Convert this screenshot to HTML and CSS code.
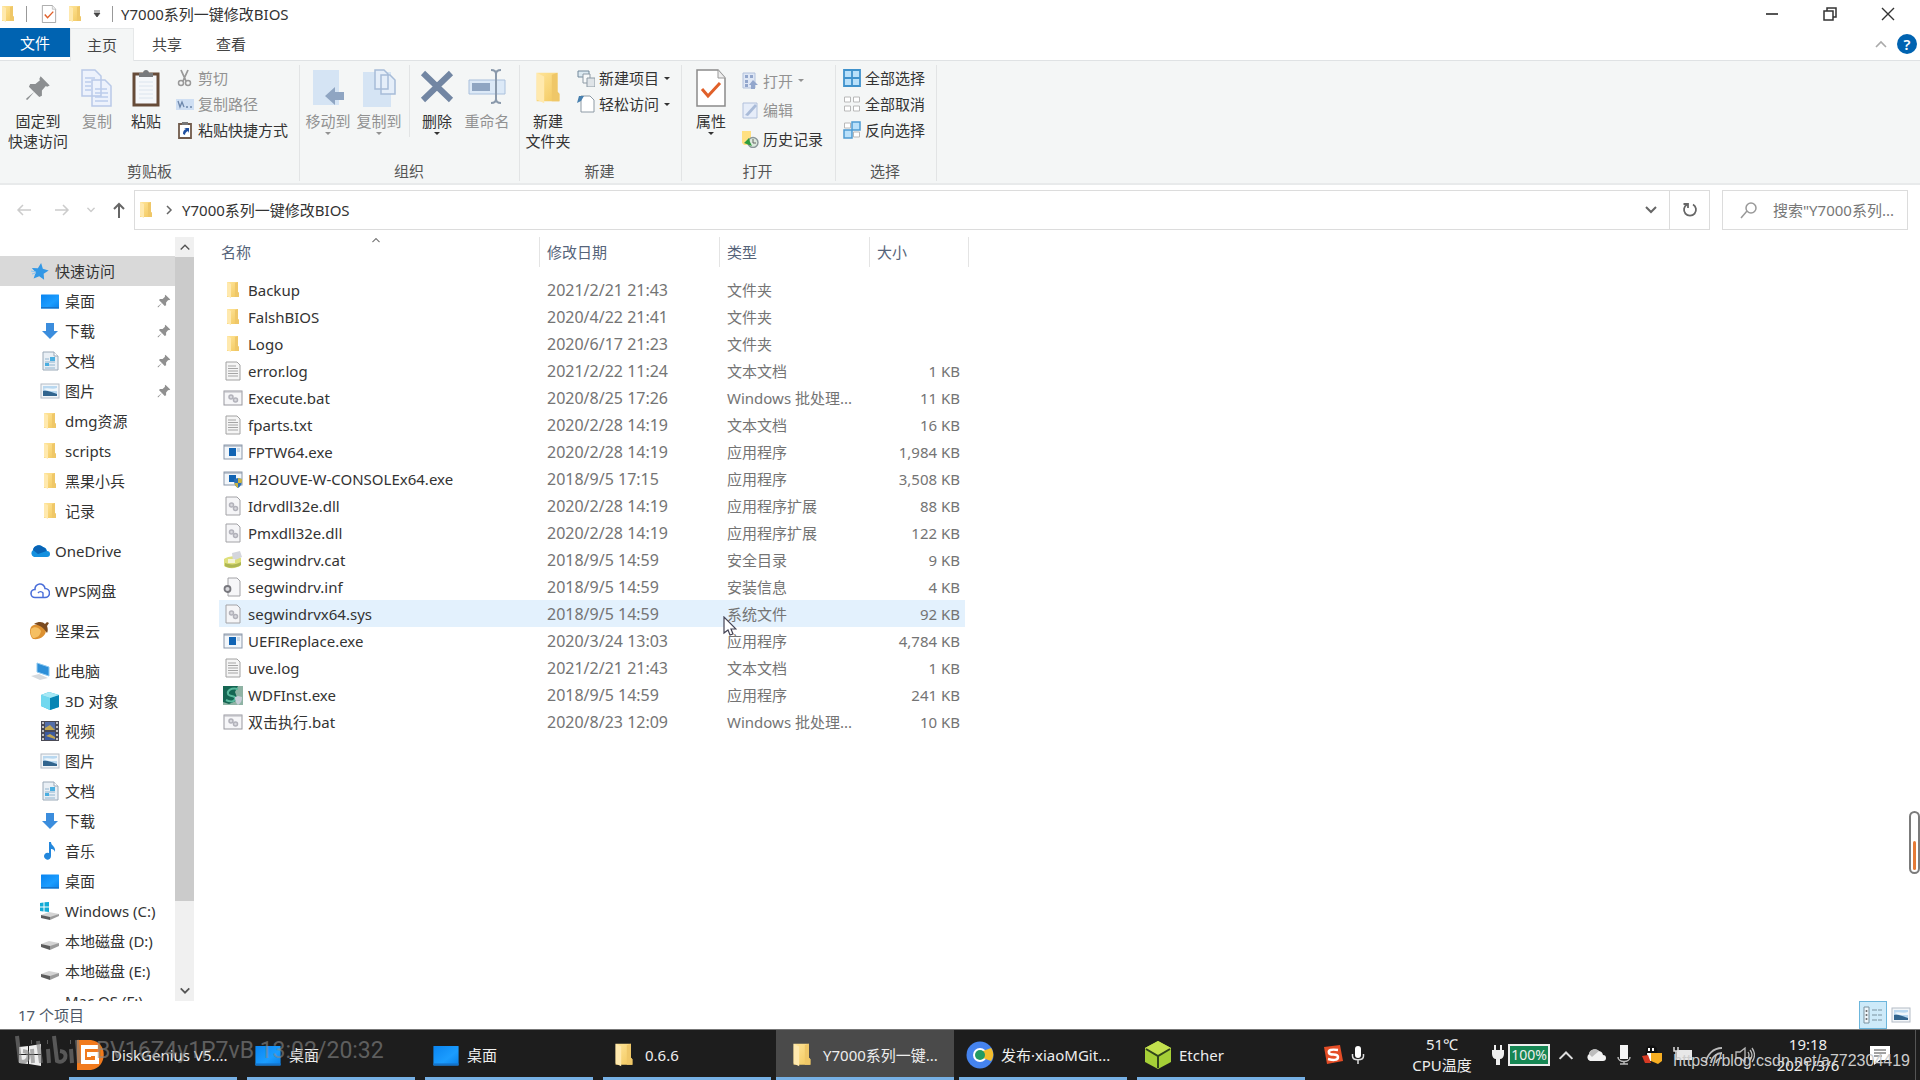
FILE: index.html
```html
<!DOCTYPE html>
<html lang="zh-CN">
<head>
<meta charset="utf-8">
<title>Y7000系列一键修改BIOS</title>
<link rel="stylesheet" href="styles.css">
</head>
<body>
<svg class="defs" aria-hidden="true">
  <defs>
    <linearGradient id="gold" x1="0" y1="0" x2="1" y2="1"><stop offset="0" stop-color="#ffe59a"/><stop offset="1" stop-color="#f2c75c"/></linearGradient>
    <linearGradient id="sky" x1="0" y1="0" x2="1" y2="1"><stop offset="0" stop-color="#0a84f0"/><stop offset="0.6" stop-color="#1b9dff"/><stop offset="1" stop-color="#0a80e8"/></linearGradient>
  </defs>
  <symbol id="folder" viewBox="0 0 20 20"><path d="M4 2h11v10l1 1v4H4z" fill="url(#gold)"/><path d="M4 2l4 2v14l-4-2z" fill="#ffe9ae"/><path d="M12 3v14h4v-4l-1-1V2z" fill="#efc768"/></symbol>
  <symbol id="desktop" viewBox="0 0 20 20"><rect x="1" y="3.500" width="18" height="14" rx="0.500" fill="url(#sky)"/><path d="M1 16h18v1.500H1z" fill="#1673c8"/></symbol>
  <symbol id="down" viewBox="0 0 20 20"><path d="M6 2h8v8h4l-8 8-8-8h4z" fill="#3b8ddd"/></symbol>
  <symbol id="docs" viewBox="0 0 20 20"><path d="M3 1h11l4 4v14H3z" fill="#e9eff5" stroke="#9aa9b8"/><path d="M14 1v4h4" fill="#fff" stroke="#9aa9b8"/><path d="M5 8h4M5 11h10M5 14h10M5 17h10" stroke="#8fb4cf"/><path d="M10 6h5v4h-5zM5 12h4v3H5z" fill="#4aaee0"/></symbol>
  <symbol id="pics" viewBox="0 0 20 20"><rect x="1" y="3" width="18" height="14" fill="#f3f6f9" stroke="#b4bcc6"/><path d="M3 5h14v10H3z" fill="#b9d8f0"/><path d="M3 10c4-1 8 1 14 3v2H3z" fill="#32658e"/><path d="M3 8c5-2 9 1 14-1v3H9z" fill="#f0f7fb"/></symbol>
  <symbol id="star" viewBox="0 0 20 20"><path d="M10 2l2.500 5.500 6 .7-4.500 4 1.300 6-5.300-3-5.300 3 1.300-6-4.500-4 6-.7z" fill="#3398e6" transform="rotate(8 10 10)"/><path d="M1 10l5 1M2 13l4-1" stroke="#8cc4ef"/></symbol>
  <symbol id="pin" viewBox="0 0 20 20"><path d="M12 1l7 7-2 1-1-.5-3 3.500v4l-2 1-4-4-5 6-1 0 0-1 6-5-4-4 1-2h4l3.500-3-.5-1z" fill="currentColor"/></symbol>
  <symbol id="onedrive" viewBox="0 0 20 20"><path d="M4 16a4 4 0 0 1-1-7 6 6 0 0 1 10-3 5 5 0 0 1 4 4 3 3 0 0 1 0 6z" fill="#1490df"/><path d="M3 9a6 6 0 0 1 10-3 5 5 0 0 1 3.500 4L8 13z" fill="#0863b5"/></symbol>
  <symbol id="wps" viewBox="0 0 20 20"><path d="M5 16.500a4 4 0 0 1 0-8 5 5 0 0 1 10-1 4.500 4.500 0 0 1 0 9z" fill="#fff" stroke="#4a6ed9" stroke-width="1.600"/><path d="M8 12a3 3 0 0 1 5 0v4" fill="none" stroke="#4a6ed9" stroke-width="1.400"/></symbol>
  <symbol id="nut" viewBox="0 0 20 20"><path d="M1 6c4-4 13-3 15 3 0 6-6 10-13 9C0 15-1 10 1 6z" fill="#dc9030"/><path d="M1 8c3-3 8-2 10 2-1 5-4 7-8 7-2-2-3-6-2-9z" fill="#f5bf62"/><path d="M4 3c5-3 9-2 11 0l2-2 2 1-2 3c1 3 1 5 0 7-3-5-7-8-13-9z" fill="#7b4b20"/></symbol>
  <symbol id="pc" viewBox="0 0 20 20"><path d="M7 2l12 4v9L7 11z" fill="#2d8fd8" stroke="#8cc8f0"/><path d="M1 15l8-2 9 4-8 2z" fill="#d6dade"/></symbol>
  <symbol id="cube" viewBox="0 0 20 20"><path d="M1 4l8-3 10 3v12l-9 3-9-4z" fill="#2bb6dc"/><path d="M1 4l9 3v12l-9-4z" fill="#71d8ef"/><path d="M10 7l9-3v12l-9 3z" fill="#0785b4"/><path d="M1 4l8-3 10 3-9 3z" fill="#a6e8f5"/></symbol>
  <symbol id="video" viewBox="0 0 20 20"><path d="M1 0h18v20H1z" fill="#4a4a55"/><path d="M5 1h10v8H5z" fill="#546ea8"/><path d="M5 11h10v8H5z" fill="#3c5aa0"/><path d="M5 7l5-3 5 5H5zM6 15l4-2 5 3v2z" fill="#c3a750"/><path d="M3 1v19M17 1v19" stroke="#eee" stroke-width="1.500" stroke-dasharray="2 2"/></symbol>
  <symbol id="music" viewBox="0 0 20 20"><path d="M9 1h2c0 4 5 4 4 10-1-3-3-3-4-3v7a3.500 3.500 0 1 1-2-3z" fill="#2387dc"/></symbol>
  <symbol id="drive" viewBox="0 0 20 20"><path d="M1 13l8-3 10 2-9 5z" fill="#d4d4d4"/><path d="M1 13l9 2v4l-9-3z" fill="#5c5c5c"/><path d="M10 15l9-3v3l-9 4z" fill="#9b9b9b"/></symbol>
  <symbol id="windrive" viewBox="0 0 20 20"><path d="M1 14l8-3 10 2-9 4z" fill="#d4d4d4"/><path d="M1 14l9 2v3l-9-2z" fill="#5c5c5c"/><path d="M10 16l9-3v2l-9 4z" fill="#9b9b9b"/><path d="M0 2l3.500-.5v4H0zM4.500 1.300L9 1v4.500H4.500zM0 6.500h3.500v4L0 10zM4.500 6.500H9V11l-4.500-.5z" fill="#13abd6"/></symbol>
  <symbol id="text" viewBox="0 0 20 20"><path d="M3 1h11l3 3v15H3z" fill="#f5f5f5" stroke="#a2a2a2"/><path d="M5 5h8M5 7.500h10M5 10h10M5 12.500h10M5 15h10" stroke="#a5a5a5"/></symbol>
  <symbol id="bat" viewBox="0 0 20 20"><rect x="1" y="3" width="18" height="14" fill="#f6f6f8" stroke="#98989f"/><path d="M1 4h18" stroke="#b5b5bc"/><circle cx="8" cy="9" r="2" fill="#d8d8de" stroke="#b2b2ba" stroke-width="1.500"/><circle cx="12.500" cy="12" r="2" fill="#d8d8de" stroke="#b2b2ba" stroke-width="1.500"/></symbol>
  <symbol id="exe" viewBox="0 0 20 20"><rect x="1" y="3" width="18" height="14" fill="#f2f6fa" stroke="#8b98aa"/><path d="M1 4h18" stroke="#8b98aa"/><path d="M6 6h7v8H6z" fill="#1164b4"/><path d="M14 7h3M14 9h3" stroke="#a2bbd5"/></symbol>
  <symbol id="exeshield" viewBox="0 0 20 20"><rect x="1" y="3" width="18" height="13" fill="#f2f6fa" stroke="#8b98aa"/><path d="M1 4h18" stroke="#8b98aa"/><path d="M6 6h7v7H6z" fill="#1164b4"/><path d="M11 10l4-1 4 1c0 5-1 7-4 9-3-2-4-4-4-9z" fill="#2c6fb5"/><path d="M15 9l4 1c0 2 0 3-.5 4H15zM11.500 14H15v5c-2-1-3-3-3.500-5z" fill="#c9b443"/></symbol>
  <symbol id="dll" viewBox="0 0 20 20"><path d="M3 1h11l3 3v15H3z" fill="#f5f5f7" stroke="#a2a2a6"/><circle cx="8.500" cy="9" r="2" fill="#d8d8de" stroke="#b2b2ba" stroke-width="1.500"/><circle cx="12.500" cy="12.500" r="2" fill="#d8d8de" stroke="#b2b2ba" stroke-width="1.500"/></symbol>
  <symbol id="cat" viewBox="0 0 20 20"><path d="M1 9c3-3 14-4 17-1v7c-4 4-13 4-17 1z" fill="#dfe07c"/><path d="M2 13c5 2 11 2 16-1v3c-4 3-13 4-16 1z" fill="#aeb653"/><path d="M9 3l8-2 2 6-9 4z" fill="#d4d6dd"/><path d="M5 9h7v4H5z" fill="#f4f4d8"/></symbol>
  <symbol id="inf" viewBox="0 0 20 20"><path d="M5 1h9l3 3v15H5z" fill="#f6f6f8" stroke="#a2a2a6"/><circle cx="4.500" cy="12" r="3" fill="#d8d8dc" stroke="#77777d" stroke-width="1.800"/></symbol>
  <symbol id="wdf" viewBox="0 0 20 20"><path d="M0 1h20v19H0z" fill="#8fb3a4"/><path d="M0 1h15l-3 6 3 8-9 4-6-2z" fill="#156653"/><path d="M15 4C8 2 4 6 5 9s8 1 7 5-7 2-9 1" fill="none" stroke="#59b99d" stroke-width="2"/><path d="M12 12l3-1 4 1c0 4-1 6-4 8-2-2-3-4-3-8z" fill="#c8cdd8"/></symbol>
  <symbol id="props" viewBox="0 0 30 38"><path d="M1 1h21l7 8v28H1z" fill="#fff" stroke="#8b8b8b" stroke-width="1.500"/><path d="M22 1v8h7" fill="#eee" stroke="#999"/><path d="M6 20l6 7L24 14" fill="none" stroke="#e0602a" stroke-width="3"/></symbol>
  <symbol id="copy" viewBox="0 0 34 40"><path d="M2 1h13l6 6v20H2zM12 11h13l6 6v20H12z" fill="#edf2fc" stroke="#b9c9e8" stroke-width="1.500"/><path d="M5 9h10M5 13h6M5 17h6M5 21h6M15 20h12M15 24h13M15 28h13M15 32h13" stroke="#bccdec" stroke-width="1.500"/></symbol>
  <symbol id="clip" viewBox="0 0 28 38"><path d="M2 5h24v31H2z" fill="#f5f7fa" stroke="#664b38" stroke-width="3"/><path d="M7 8V4h4c0-4 6-4 6 0h4v4z" fill="#77797c"/><path d="M7 13h14M7 17h14M7 21h14M7 25h14M7 29h14" stroke="#dbe4ee"/></symbol>
  <symbol id="caret" viewBox="0 0 8 5"><path d="M1 1h6L4 4z" fill="currentColor"/></symbol>
  <symbol id="up" viewBox="0 0 14 8"><path d="M2 7l5-5 5 5" fill="none" stroke="currentColor" stroke-width="1.600"/></symbol>
  <symbol id="dn" viewBox="0 0 14 8"><path d="M2 1l5 5 5-5" fill="none" stroke="currentColor" stroke-width="2"/></symbol>
  <symbol id="mic" viewBox="0 0 14 20"><rect x="4" y="1" width="6" height="12" rx="3" fill="#fff"/><path d="M1.500 9v2c0 5 11 5 11 0V9M7 15v4" fill="none" stroke="#ddd" stroke-width="1.500"/></symbol>
</svg>

<header class="titlebar">
  <svg class="i20 tight"><use href="#folder"/></svg>
  <span class="tick"></span>
  <button class="plain" aria-label="属性"><svg width="16" height="18"><use href="#props"/></svg></button>
  <button class="plain" aria-label="新建文件夹"><svg class="i20"><use href="#folder"/></svg></button>
  <button class="plain qat" aria-label="自定义快速访问工具栏"><svg width="8" height="8" viewBox="0 0 8 8"><path d="M1 1h6M1 3h6L4 7z" fill="#444" stroke="#444" stroke-width="0.800"/></svg></button>
  <span class="tick"></span>
  <h1>Y7000系列一键修改BIOS</h1>
  <div class="winctl">
    <button class="plain" aria-label="最小化"><svg width="14" height="14"><path d="M1 7h12" stroke="#555" stroke-width="2"/></svg></button>
    <button class="plain" aria-label="还原"><svg width="14" height="14"><path d="M1 4h9v9H1zM4 4V1h9v9h-3" fill="none" stroke="#333" stroke-width="1.500"/></svg></button>
    <button class="plain" aria-label="关闭"><svg width="14" height="14"><path d="M1 1l12 12M13 1L1 13" stroke="#333" stroke-width="1.400"/></svg></button>
  </div>
</header>

<nav class="tabs">
  <button class="tab file">文件</button>
  <button class="tab active">主页</button>
  <button class="tab share">共享</button>
  <button class="tab">查看</button>
  <div class="tabend">
    <button class="plain faint" aria-label="最小化功能区"><svg width="14" height="8"><use href="#up"/></svg></button>
    <button class="help" aria-label="帮助">?</button>
  </div>
</nav>

<section class="ribbon">
  <div class="group g1">
    <div class="tools">
      <button class="big w76"><span class="pic pinned"><svg width="26" height="26"><use href="#pin"/></svg></span>固定到<br>快速访问</button>
      <button class="big w42 off"><span class="pic"><svg width="34" height="40"><use href="#copy"/></svg></span>复制</button>
      <button class="big w56"><span class="pic"><svg width="28" height="38"><use href="#clip"/></svg></span>粘贴</button>
      <div class="stack">
        <button class="small off"><svg class="i18" viewBox="0 0 18 18"><path d="M5 1l5 11M12 1L7 12" stroke="#999" stroke-width="1.800"/><circle cx="5" cy="14" r="2.500" fill="none" stroke="#999" stroke-width="1.500"/><circle cx="12" cy="14" r="2.500" fill="none" stroke="#999" stroke-width="1.500"/></svg>剪切</button>
        <button class="small off"><svg class="i18" viewBox="0 0 18 18"><path d="M0 4h18v11H0z" fill="#cfdff3"/><path d="M2 6l2 6 2-5 2 5M10 12h2M14 12h2" fill="none" stroke="#6e88ac" stroke-width="1.300"/></svg>复制路径</button>
        <button class="small"><svg class="i18" viewBox="0 0 18 18"><path d="M3 3h12v14H3z" fill="#fff" stroke="#705a4b" stroke-width="1.800"/><path d="M6 1h6v3H6z" fill="#777"/><path d="M7 13c0-3 1-4 3-5L8 7h5v5l-1-2c-2 1-3 2-3 4z" fill="#1f4fa0"/></svg>粘贴快捷方式</button>
      </div>
    </div>
    <h2>剪贴板</h2>
  </div>
  <div class="group g2">
    <div class="tools">
      <button class="big w54 off"><span class="pic"><svg width="34" height="38" viewBox="0 0 34 38"><path d="M2 1h26v35H2z" fill="#d5e4f4"/><path d="M14 27l10-9v5h9v8h-9v5z" fill="#8fa5c2"/></svg></span>移动到<svg class="drop"><use href="#caret"/></svg></button>
      <button class="big w48 off"><span class="pic"><svg width="34" height="40" viewBox="0 0 34 40"><path d="M1 3h28v35H1z" fill="#d5e4f4"/><path d="M13 1h9l4 4v15H13zM19 6h9l5 5v14H19z" fill="#e5eef9" stroke="#a7bcd8" stroke-width="1.500"/></svg></span>复制到<svg class="drop"><use href="#caret"/></svg></button>
      <span class="inner"></span>
      <button class="big w50"><span class="pic"><svg width="34" height="34" viewBox="0 0 34 34"><path d="M3 4l28 27M31 4L3 31" stroke="#7286a3" stroke-width="6"/></svg></span>删除<svg class="drop"><use href="#caret"/></svg></button>
      <button class="big w50 off"><span class="pic"><svg width="38" height="36" viewBox="0 0 38 36"><path d="M1 11h36v14H1z" fill="#dce9f7" stroke="#aac0dc"/><path d="M4 14h18v8H4z" fill="#8fa5c2"/><path d="M23 1c3 0 5 1 5 4 0-3 2-4 5-4M28 5v26M23 34c3 0 5-1 5-4 0 3 2 4 5 4" fill="none" stroke="#8a99ab" stroke-width="2"/></svg></span>重命名</button>
    </div>
    <h2>组织</h2>
  </div>
  <div class="group g3">
    <div class="tools">
      <button class="big w54"><span class="pic"><svg width="38" height="38"><use href="#folder"/></svg></span>新建<br>文件夹</button>
      <div class="stack">
        <button class="small"><svg class="i18" viewBox="0 0 18 18"><path d="M1 2h11v6H1z" fill="#dce9f1" stroke="#73899b"/><path d="M6 5h7v9H6z" fill="#f7f9fa" stroke="#8d9aa5"/><path d="M10 9h8v9h-8z" fill="#dfe4e8" stroke="#8d9aa5"/></svg>新建项目<svg class="side"><use href="#caret"/></svg></button>
        <button class="small"><svg class="i18" viewBox="0 0 18 18"><path d="M4 1h9l4 4v12H4z" fill="#fff" stroke="#8d9aa5"/><path d="M0 8l2-7h5L4 6z" fill="#467fae"/></svg>轻松访问<svg class="side"><use href="#caret"/></svg></button>
      </div>
    </div>
    <h2>新建</h2>
  </div>
  <div class="group g4">
    <div class="tools">
      <button class="big w56"><span class="pic"><svg width="30" height="38"><use href="#props"/></svg></span>属性<svg class="drop"><use href="#caret"/></svg></button>
      <div class="stack tall">
        <button class="small off"><svg class="i18" viewBox="0 0 18 18"><path d="M2 1h12v15H2z" fill="#dfe7f5" stroke="#b2c1dc"/><path d="M4 3h3v3H4zM4 8h3v3H4zM9 3h3v3H9zM4 12h3v3H4zM12 8l5 5h-3v4h-4v-4H8z" fill="#92a6cc"/></svg>打开<svg class="side"><use href="#caret"/></svg></button>
        <button class="small off"><svg class="i18" viewBox="0 0 18 18"><path d="M2 2h14v15H2z" fill="#e6edf9" stroke="#b2c1dc"/><path d="M4 14L14 3l2 2L7 15z" fill="#a9bbd8"/></svg>编辑</button>
        <button class="small"><svg class="i18" viewBox="0 0 18 18"><path d="M1 1h9v14H3L1 13z" fill="#ffe082"/><circle cx="12" cy="12.500" r="5" fill="#dbe9dc" stroke="#8a9699" stroke-width="1.400"/><path d="M12 9v4h3" fill="none" stroke="#666"/><path d="M3 13l5-5 1 4 2 4z" fill="#2d9c3e"/></svg>历史记录</button>
      </div>
    </div>
    <h2>打开</h2>
  </div>
  <div class="group g5">
    <div class="tools">
      <div class="stack">
        <button class="small"><svg class="i18" viewBox="0 0 18 18"><path d="M1 1h16v16H1zM9 1v16M1 9h16" fill="#b9e0fa" stroke="#4092cc" stroke-width="1.800"/></svg>全部选择</button>
        <button class="small"><svg class="i18" viewBox="0 0 18 18"><path d="M1.500 2h6v5h-6zM10.500 2h6v5h-6zM1.500 11h6v5h-6zM10.500 11h6v5h-6z" fill="#fff" stroke="#b8b8b8"/></svg>全部取消</button>
        <button class="small"><svg class="i18" viewBox="0 0 18 18"><path d="M1.500 2h6v5h-6zM10.500 11h6v5h-6z" fill="#fff" stroke="#b8b8b8"/><path d="M9 1h8v8H9zM1 9h8v8H1z" fill="#b9e0fa" stroke="#4d9bd2" stroke-width="1.500"/></svg>反向选择</button>
      </div>
    </div>
    <h2>选择</h2>
  </div>
</section>

<section class="addressrow">
  <div class="moves">
    <button class="plain pale" aria-label="后退"><svg width="16" height="14"><path d="M15 7H2M7 2L2 7l5 5" fill="none" stroke="currentColor" stroke-width="1.500"/></svg></button>
    <button class="plain pale" aria-label="前进"><svg width="16" height="14"><path d="M1 7h13M9 2l5 5-5 5" fill="none" stroke="currentColor" stroke-width="1.500"/></svg></button>
    <button class="plain pale" aria-label="最近浏览的位置"><svg width="10" height="8" viewBox="0 0 14 8"><use href="#dn"/></svg></button>
    <button class="plain" aria-label="上移"><svg width="14" height="16"><path d="M7 16V2M2 7l5-5 5 5" fill="none" stroke="#666" stroke-width="2"/></svg></button>
  </div>
  <div class="address">
    <svg class="i20"><use href="#folder"/></svg>
    <svg class="sep" width="8" height="12"><path d="M2 2l4 4-4 4" fill="none" stroke="#666" stroke-width="1.500"/></svg>
    <a href="#">Y7000系列一键修改BIOS</a>
    <button class="plain expand" aria-label="历史位置"><svg width="14" height="8"><use href="#dn"/></svg></button>
    <button class="plain refresh" aria-label="刷新"><svg width="16" height="16"><path d="M5 2.500a6 6 0 1 0 6 0M1.500 2H6v4" fill="none" stroke="#666" stroke-width="1.800"/></svg></button>
  </div>
  <label class="search"><svg width="18" height="18"><circle cx="11" cy="7" r="5" fill="none" stroke="#999" stroke-width="1.500"/><path d="M7 10l-6 7" stroke="#999" stroke-width="1.500"/></svg><input type="text" aria-label="搜索" placeholder="搜索&quot;Y7000系列..."></label>
</section>

<main class="content">
  <nav class="tree">
    <ul>
      <li><a class="root chosen" href="#"><svg class="i20"><use href="#star"/></svg>快速访问</a></li>
      <li><a href="#"><svg class="i20"><use href="#desktop"/></svg>桌面<svg class="mark"><use href="#pin"/></svg></a></li>
      <li><a href="#"><svg class="i20"><use href="#down"/></svg>下载<svg class="mark"><use href="#pin"/></svg></a></li>
      <li><a href="#"><svg class="i20"><use href="#docs"/></svg>文档<svg class="mark"><use href="#pin"/></svg></a></li>
      <li><a href="#"><svg class="i20"><use href="#pics"/></svg>图片<svg class="mark"><use href="#pin"/></svg></a></li>
      <li><a href="#"><svg class="i20"><use href="#folder"/></svg>dmg资源</a></li>
      <li><a href="#"><svg class="i20"><use href="#folder"/></svg>scripts</a></li>
      <li><a href="#"><svg class="i20"><use href="#folder"/></svg>黑果小兵</a></li>
      <li><a href="#"><svg class="i20"><use href="#folder"/></svg>记录</a></li>
    </ul>
    <ul><li><a class="root" href="#"><svg class="i20"><use href="#onedrive"/></svg>OneDrive</a></li></ul>
    <ul><li><a class="root" href="#"><svg class="i20"><use href="#wps"/></svg>WPS网盘</a></li></ul>
    <ul><li><a class="root" href="#"><svg class="i20"><use href="#nut"/></svg>坚果云</a></li></ul>
    <ul>
      <li><a class="root" href="#"><svg class="i20"><use href="#pc"/></svg>此电脑</a></li>
      <li><a href="#"><svg class="i20"><use href="#cube"/></svg>3D 对象</a></li>
      <li><a href="#"><svg class="i20"><use href="#video"/></svg>视频</a></li>
      <li><a href="#"><svg class="i20"><use href="#pics"/></svg>图片</a></li>
      <li><a href="#"><svg class="i20"><use href="#docs"/></svg>文档</a></li>
      <li><a href="#"><svg class="i20"><use href="#down"/></svg>下载</a></li>
      <li><a href="#"><svg class="i20"><use href="#music"/></svg>音乐</a></li>
      <li><a href="#"><svg class="i20"><use href="#desktop"/></svg>桌面</a></li>
      <li><a href="#"><svg class="i20"><use href="#windrive"/></svg>Windows (C:)</a></li>
      <li><a href="#"><svg class="i20"><use href="#drive"/></svg>本地磁盘 (D:)</a></li>
      <li><a href="#"><svg class="i20"><use href="#drive"/></svg>本地磁盘 (E:)</a></li>
      <li><a href="#"><svg class="i20"></svg>Mac OS (F:)</a></li>
    </ul>
  </nav>
  <div class="scroll">
    <button class="plain" aria-label="向上滚动"><svg width="12" height="8" viewBox="0 0 14 8"><use href="#up"/></svg></button>
    <div class="track"><div class="thumb"></div></div>
    <button class="plain" aria-label="向下滚动"><svg width="12" height="8" viewBox="0 0 14 8"><use href="#dn"/></svg></button>
  </div>
  <div class="files">
    <table>
      <colgroup><col class="c-name"><col class="c-date"><col class="c-type"><col class="c-size"></colgroup>
      <thead><tr><th>名称<svg class="sort" width="10" height="6" viewBox="0 0 14 8"><use href="#up"/></svg></th><th>修改日期</th><th>类型</th><th>大小</th></tr></thead>
      <tbody>
        <tr><td><svg class="i20"><use href="#folder"/></svg>Backup</td><td>2021/2/21 21:43</td><td>文件夹</td><td></td></tr>
        <tr><td><svg class="i20"><use href="#folder"/></svg>FalshBIOS</td><td>2020/4/22 21:41</td><td>文件夹</td><td></td></tr>
        <tr><td><svg class="i20"><use href="#folder"/></svg>Logo</td><td>2020/6/17 21:23</td><td>文件夹</td><td></td></tr>
        <tr><td><svg class="i20"><use href="#text"/></svg>error.log</td><td>2021/2/22 11:24</td><td>文本文档</td><td>1 KB</td></tr>
        <tr><td><svg class="i20"><use href="#bat"/></svg>Execute.bat</td><td>2020/8/25 17:26</td><td>Windows 批处理...</td><td>11 KB</td></tr>
        <tr><td><svg class="i20"><use href="#text"/></svg>fparts.txt</td><td>2020/2/28 14:19</td><td>文本文档</td><td>16 KB</td></tr>
        <tr><td><svg class="i20"><use href="#exe"/></svg>FPTW64.exe</td><td>2020/2/28 14:19</td><td>应用程序</td><td>1,984 KB</td></tr>
        <tr><td><svg class="i20"><use href="#exeshield"/></svg>H2OUVE-W-CONSOLEx64.exe</td><td>2018/9/5 17:15</td><td>应用程序</td><td>3,508 KB</td></tr>
        <tr><td><svg class="i20"><use href="#dll"/></svg>Idrvdll32e.dll</td><td>2020/2/28 14:19</td><td>应用程序扩展</td><td>88 KB</td></tr>
        <tr><td><svg class="i20"><use href="#dll"/></svg>Pmxdll32e.dll</td><td>2020/2/28 14:19</td><td>应用程序扩展</td><td>122 KB</td></tr>
        <tr><td><svg class="i20"><use href="#cat"/></svg>segwindrv.cat</td><td>2018/9/5 14:59</td><td>安全目录</td><td>9 KB</td></tr>
        <tr><td><svg class="i20"><use href="#inf"/></svg>segwindrv.inf</td><td>2018/9/5 14:59</td><td>安装信息</td><td>4 KB</td></tr>
        <tr class="hover"><td><svg class="i20"><use href="#dll"/></svg>segwindrvx64.sys</td><td>2018/9/5 14:59</td><td>系统文件</td><td>92 KB</td></tr>
        <tr><td><svg class="i20"><use href="#exe"/></svg>UEFIReplace.exe</td><td>2020/3/24 13:03</td><td>应用程序</td><td>4,784 KB</td></tr>
        <tr><td><svg class="i20"><use href="#text"/></svg>uve.log</td><td>2021/2/21 21:43</td><td>文本文档</td><td>1 KB</td></tr>
        <tr><td><svg class="i20"><use href="#wdf"/></svg>WDFInst.exe</td><td>2018/9/5 14:59</td><td>应用程序</td><td>241 KB</td></tr>
        <tr><td><svg class="i20"><use href="#bat"/></svg>双击执行.bat</td><td>2020/8/23 12:09</td><td>Windows 批处理...</td><td>10 KB</td></tr>
      </tbody>
    </table>
  </div>
</main>

<footer class="status">
  <span>17 个项目</span>
  <div class="views">
    <button class="view on" aria-label="详细信息"><svg width="20" height="18"><path d="M1 1h5v16H1z" fill="#eef6fb" stroke="#7b929f"/><circle cx="3.500" cy="5" r="1" fill="#666"/><circle cx="3.500" cy="9" r="1" fill="#666"/><circle cx="3.500" cy="13" r="1" fill="#666"/><path d="M9 4h10M9 9h10M9 14h10" stroke="#7b929f" stroke-dasharray="5 1"/></svg></button>
    <button class="view" aria-label="大图标"><svg class="i20"><use href="#pics"/></svg></button>
  </div>
</footer>

<div class="taskbar">
  <button class="start" aria-label="开始"><svg width="22" height="22"><path d="M0 3l9-1v8H0zM10 2l12-2v10H10zM0 11h9v9l-9-1zM10 11h12v11l-12-2z" fill="#eee"/></svg></button>
  <button class="task"><svg class="i28 logo" viewBox="0 0 28 30"><path d="M1 0h14c17 2 17 27 0 30H1z" fill="#f17a1d"/><path d="M22 7H7v15h14v-8h-8v3M7 22h14" fill="none" stroke="#fff" stroke-width="4"/></svg><span>DiskGenius V5....</span></button>
  <button class="task"><svg class="i28"><use href="#desktop"/></svg><span>桌面</span></button>
  <button class="task"><svg class="i28"><use href="#desktop"/></svg><span>桌面</span></button>
  <button class="task"><svg class="i28"><use href="#folder"/></svg><span>0.6.6</span></button>
  <button class="task current"><svg class="i28"><use href="#folder"/></svg><span>Y7000系列一键...</span></button>
  <button class="task"><svg class="i28" viewBox="0 0 28 28"><circle cx="14" cy="14" r="13.500" fill="#4583ee"/><circle cx="14" cy="14" r="7" fill="#fff"/><path d="M17 10l8-3c3 4 3 9 0 13l-8-3z" fill="#f3bd2d"/><circle cx="14" cy="14" r="5" fill="#239b62"/></svg><span>发布·xiaoMGit...</span></button>
  <button class="task"><svg class="i28" viewBox="0 0 28 28"><path d="M14 0l13 7v14l-13 7-13-7V7z" fill="#a5cf37"/><path d="M14 0l13 7-13 7L1 7z" fill="#c3e04e"/><path d="M2 8l12 7 12-7M14 15v12" fill="none" stroke="#31451b" stroke-width="2"/></svg><span>Etcher</span></button>
  <div class="tray">
    <svg class="ime" width="20" height="20"><path d="M1 2l16-2 3 16-16 3z" fill="#e44d26"/><path d="M15 5C8 4 5 5 6 8s9 0 9 4-6 3-10 2" fill="none" stroke="#fff" stroke-width="2.500"/></svg>
    <svg class="voice" width="14" height="20"><use href="#mic"/></svg>
    <div class="two cpu"><span>51℃</span><span>CPU温度</span></div>
    <svg class="plug" width="14" height="22"><path d="M3 1h2v5h4V1h2v5h2v4c0 3-2 5-4 5v6H5v-6c-2 0-4-2-4-5V6h2z" fill="#eee"/></svg>
    <span class="charge">100%</span>
    <button class="plain light" aria-label="显示隐藏的图标"><svg width="18" height="12" viewBox="0 0 14 8"><use href="#up"/></svg></button>
    <svg class="i20" viewBox="0 0 20 20"><path d="M4 16a4 4 0 0 1-1-7 6 6 0 0 1 10-3 5 5 0 0 1 4 4 3 3 0 0 1 0 6z" fill="#f2f2f2"/><path d="M3 9a6 6 0 0 1 10-3L6 12z" fill="#bdbdbd"/></svg>
    <svg width="14" height="20"><path d="M3 0h8v14H3z" fill="#f5f5f5"/><path d="M1 12c0 6 12 6 12 0M7 16v3M3 19h8" fill="none" stroke="#bbb" stroke-width="1.500"/></svg>
    <svg class="i20" viewBox="0 0 20 20"><path d="M4 4c1-5 10-5 11 0l1 9H3z" fill="#111"/><path d="M6 3h2v3H6zM10 3h2v3h-2zM5 8h6v8H6z" fill="#fff"/><path d="M0 11l6-1 3 8H3z" fill="#d63a24"/><path d="M9 8h11v8l-4 3-7-3z" fill="#f7ae22"/></svg>
    <svg class="i20" viewBox="0 0 20 20"><path d="M4 5h15v10H4z" fill="#e8e8e8"/><path d="M1 2v4h4V2M3 6v9" fill="none" stroke="#ddd" stroke-width="1.500"/></svg>
    <svg class="i20" viewBox="0 0 20 20"><path d="M2 18A16 16 0 0 1 18 3M7 18A11 11 0 0 1 18 8M12 18a6 6 0 0 1 6-5" fill="none" stroke="#bbb" stroke-width="1.800"/></svg>
    <svg class="i20" viewBox="0 0 20 20"><path d="M1 7h4l5-4v14l-5-4H1zM13 7q2 3 0 6M15 5q4 5 0 10M17 3q5 7 0 14" fill="none" stroke="#bbb" stroke-width="1.300"/></svg>
    <div class="two clock"><span>19:18</span><span>2021/3/6</span></div>
    <button class="plain note" aria-label="通知"><svg width="20" height="20"><path d="M0 1h20v14H10l-6 5v-5H0z" fill="#fff"/><path d="M4 5h12M4 8h12M4 11h8" stroke="#444"/></svg></button>
    <span class="peek"></span>
  </div>
  <div class="overlay video">
    <svg width="66" height="32" viewBox="0 0 66 32"><path d="M2 1l3 25c8 4 13-9 3-10M17 14l1 14M23 6l3 22M33 14l1 14M39 1l3 25c8 4 13-9 3-10M56 14l1 14M62 5l2 23M16 7h1M32 7h1M55 7h1" fill="none" stroke="#808080" stroke-width="4"/></svg>
    <span>BV16Z4y1P7vB 13:02/20:32</span>
  </div>
  <div class="overlay source">https://blog.csdn.net/a772304419</div>
</div>

<svg class="pointer" width="14" height="20"><path d="M1 1v16l4-3 2 5 3-1-2-5h5z" fill="#fff" stroke="#445" stroke-width="1.200"/></svg>
<div class="gauge"><span></span></div>
</body>
</html>
```
FILE: styles.css
```css
* { box-sizing: border-box; }
html, body { height: 100%; }
body {
  margin: 0;
  display: flex;
  flex-direction: column;
  overflow: hidden;
  position: relative;
  background: #fff;
  color: #333;
  font: 15px/20px "Noto Sans", "Noto Sans CJK SC", sans-serif;
}
button, input { font: inherit; color: inherit; }
button { border: 0; background: none; padding: 0; }
svg { display: block; flex: none; }
ul { list-style: none; margin: 0; padding: 0; }
h1, h2 { font: inherit; margin: 0; }
a { color: inherit; text-decoration: none; }
.defs { position: absolute; width: 0; height: 0; }
.i18 { width: 18px; height: 18px; }
.i20 { width: 20px; height: 20px; }
.i28 { width: 28px; height: 28px; }
.plain { display: flex; align-items: center; justify-content: center; }

.titlebar { display: flex; align-items: center; height: 28px; flex: none; }
.titlebar .tight { margin-left: -2px; }
.titlebar .tick { width: 1px; height: 16px; background: #999; margin: 0 8px; }
.titlebar .tick + .plain { margin: 0 8px 0 6px; }
.titlebar .qat { width: 24px; }
.titlebar .qat + .tick { margin-left: 3px; }
.winctl { display: flex; margin-left: auto; padding-right: 3px; }
.winctl .plain { width: 58px; height: 28px; }

.tabs { display: flex; height: 33px; flex: none; border-bottom: 1px solid #dfe2e4; }
.tab { width: 62px; height: 32px; color: #444; }
.tab.file { width: 70px; height: 29px; background: #0063b1; color: #fff; }
.tab.active { width: 64px; height: 33px; background: #f4f6f6; border: 1px solid #e6e8e9; border-bottom: 0; }
.tab.share { width: 66px; }
.tabend { display: flex; align-items: center; gap: 9px; margin-left: auto; padding-right: 3px; }
.faint { color: #aaa; }
.help { width: 20px; height: 20px; border-radius: 50%; background: #0063b1; color: #fff; font-weight: 600; }

.ribbon { display: flex; height: 124px; flex: none; background: #f4f6f6; border-bottom: 2px solid #e8eaeb; }
.group { display: flex; flex-direction: column; height: 116px; margin-top: 4px; border-right: 1px solid #e2e4e5; }
.group h2 { text-align: center; margin-top: auto; color: #555; }
.g1 { width: 300px; }
.g2 { width: 220px; padding: 0 2px 0 1px; }
.g3 { width: 162px; padding: 0 3px 0 1px; }
.g4 { width: 154px; padding: 0 3px 0 1px; }
.g5 { width: 101px; padding: 0 7px 0 5px; }
.tools { display: flex; }
.big { display: flex; flex-direction: column; align-items: center; white-space: nowrap; }
.big .pic { display: flex; align-items: flex-start; justify-content: center; height: 46px; padding-top: 4px; }
.big .pinned { padding-top: 10px; color: #8c8f91; }
.big .drop { width: 8px; height: 5px; }
.w42 { width: 42px; }
.w48 { width: 48px; }
.w50 { width: 50px; }
.w54 { width: 54px; }
.w56 { width: 56px; }
.w76 { width: 76px; }
.off { color: #929292; }
.inner { width: 1px; height: 72px; margin: 0 2px 0 6px; background: #e2e4e5; }
.stack { display: flex; flex-direction: column; padding-left: 2px; }
.small { display: flex; align-items: center; gap: 4px; height: 26px; white-space: nowrap; }
.tall { padding-top: 1px; }
.tall .small { height: 29px; }
.small .side { width: 8px; height: 5px; }

.addressrow { display: flex; align-items: flex-start; height: 52px; flex: none; padding: 5px 12px 0 0; }
.moves { display: flex; align-items: center; gap: 22px; width: 134px; height: 40px; padding-left: 16px; }
.moves .plain + .plain + .plain { margin-left: -6px; }
.moves .plain:last-child { margin-left: -8px; }
.pale { color: #ccc; }
.address { display: flex; align-items: center; flex: 1; height: 40px; border: 1px solid #dcdcdc; padding-left: 1px; }
.address .sep { margin: 0 9px; }
.expand { width: 36px; height: 38px; margin-left: auto; color: #666; }
.refresh { width: 40px; height: 38px; border-left: 1px solid #dcdcdc; }
.search { display: flex; align-items: center; gap: 15px; width: 186px; height: 40px; margin-left: 12px; padding-left: 17px; border: 1px solid #dcdcdc; }
.search input { width: 134px; border: 0; padding: 0; outline: 0; background: none; }
.search input::placeholder { color: #777; opacity: 1; }

.content { display: flex; flex: 1; min-height: 0; }
.tree { width: 175px; overflow: hidden; padding-top: 19px; }
.tree ul + ul { margin-top: 10px; }
.tree a { display: flex; align-items: center; gap: 5px; height: 30px; padding-left: 40px; white-space: nowrap; }
.tree .root { padding-left: 30px; }
.tree .chosen { background: #d9d9d9; }
.mark { width: 14px; height: 14px; margin: 0 4px 0 auto; color: #909090; }
.scroll { display: flex; flex-direction: column; width: 19px; background: #f0f0f0; color: #555; }
.scroll .plain { height: 20px; }
.track { flex: 1; }
.thumb { height: 89%; background: #cbcbcb; }
.files { flex: 1; padding-left: 25px; }
table { table-layout: fixed; width: 750px; border-collapse: separate; border-spacing: 0; }
.c-name { width: 320px; }
.c-date { width: 180px; }
.c-type { width: 150px; }
.c-size { width: 100px; }
th { position: relative; height: 30px; padding: 0 0 0 7px; border-left: 1px solid #e4e4e4; text-align: left; font-weight: 400; color: #56647a; }
th:first-child { padding-left: 2px; border-left: 0; }
th:last-child { border-right: 1px solid #e4e4e4; }
.sort { position: absolute; left: 152px; top: 0; color: #777; }
tbody::before { content: ""; display: block; height: 9px; }
td { height: 27px; padding: 0 0 0 8px; white-space: nowrap; color: #747474; background-clip: padding-box; }
td:nth-child(2) { font-size: 16px; }
td:first-child { display: flex; align-items: center; gap: 5px; padding-left: 4px; color: #333; }
td:last-child { text-align: right; padding: 0 5px 0 0; border-right: 4px solid transparent; }
.hover td { background-color: #e3f1fd; }

.status { display: flex; align-items: center; justify-content: space-between; height: 28px; flex: none; padding: 0 5px 0 18px; color: #4e5868; }
.views { display: flex; }
.view { display: flex; align-items: center; justify-content: center; width: 28px; height: 28px; }
.view.on { background: #cdeaf9; border: 1px solid #6cb6dc; }

.taskbar { position: relative; display: flex; height: 51px; flex: none; background: #1d1d1d; color: #eee; border-top: 1px solid #777; }
.start { width: 64px; padding-left: 19px; flex: none; }
.task { display: flex; align-items: center; gap: 7px; width: 178px; flex: none; padding-left: 12px; text-align: left; white-space: nowrap;
  background: linear-gradient(#76b0e4, #76b0e4) 5px 100% / 168px 3px no-repeat; }
.task.current { background: linear-gradient(#76b0e4, #76b0e4) 0 100% / 100% 3px no-repeat #4a4a4a; }
.logo { height: 30px; }
.tray { display: flex; align-items: center; margin-left: auto; gap: 11px; }
.two { display: flex; flex-direction: column; flex: none; text-align: center; line-height: 21px; }
.cpu { width: 62px; margin: 0 7px 0 35px; }
.voice { margin-left: -3px; }
.plug { margin-right: -8px; }
.charge { width: 42px; height: 22px; border: 2px solid #eee; background: #168653; font-size: 14px; line-height: 18px; text-align: center; }
.light { color: #ddd; margin-left: -4px; }
.clock { width: 68px; margin: 0 12px 0 8px; }
.note { margin: 0 14px 0 5px; }
.peek { width: 1px; height: 50px; background: #555; margin-right: 4px; }
.overlay { position: absolute; white-space: nowrap; pointer-events: none; }
.video { left: 15px; top: 5px; display: flex; align-items: center; gap: 15px; opacity: 0.6; color: #8a8a8a; font: 23px/28px Roboto, sans-serif; }
.source { right: 10px; top: 21px; color: #ccc; font: 16px/20px "Liberation Sans", sans-serif; }

.pointer { position: absolute; left: 723px; top: 616px; }
.gauge { position: absolute; right: 0; top: 811px; width: 11px; height: 63px; padding: 2px; border: 2px solid #7b7b7b; border-radius: 6px; background: #fff; display: flex; align-items: flex-end; }
.gauge span { width: 100%; height: 29px; border-radius: 2px; background: #e57a36; }
```
